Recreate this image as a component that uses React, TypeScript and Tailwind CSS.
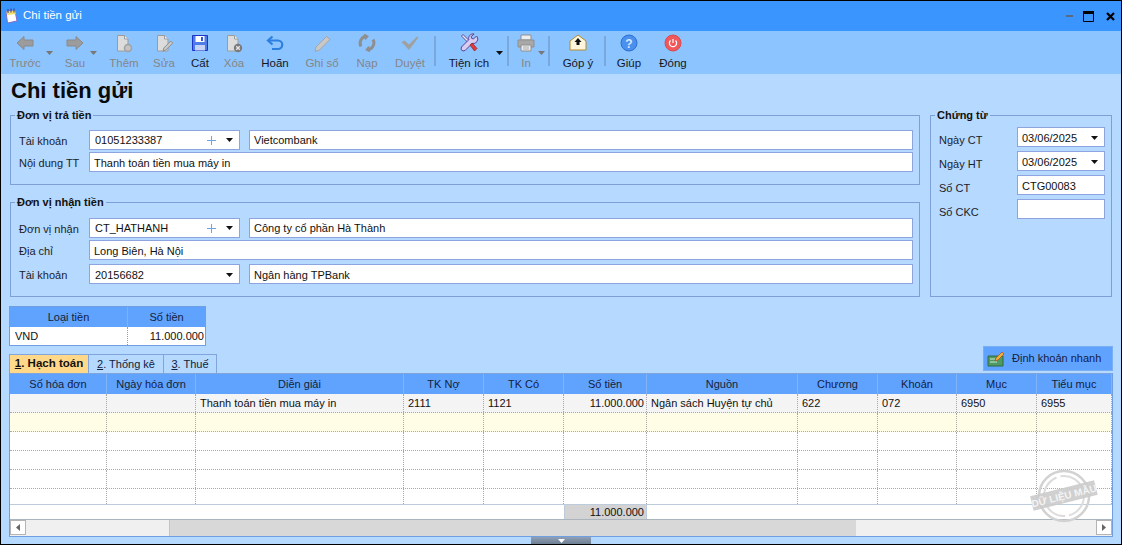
import type { ReactNode } from "react"

const gridCols = "grid grid-cols-[97px_89px_208px_80px_80px_83px_151px_80px_79px_80px_75px]"

const Caret = ({ className = "" }: { className?: string }) => (
  <svg width="7" height="4" viewBox="0 0 7 4" className={className}>
    <polygon points="0,0 7,0 3.5,4" fill="currentColor" />
  </svg>
)

const Page = ({ children }: { children?: ReactNode }) => (
  <svg width="20" height="20" viewBox="0 0 20 20">
    <path d="M3.500 2.500h7l3.500 3.500v12h-10.500z" fill="#dcdcdc" stroke="#9c9c9c" />
    <path d="M10.500 2.500v3.500h3.500" fill="#f4f4f4" stroke="#9c9c9c" />
    {children}
  </svg>
)

const icons: Record<string, ReactNode> = {
  prev: (
    <svg width="20" height="20" viewBox="0 0 20 20">
      <path d="M2 10l7-6.500v3.500h9v6H9v3.500z" fill="#9c9c9c" stroke="#8a8a8a" />
    </svg>
  ),
  next: (
    <svg width="20" height="20" viewBox="0 0 20 20">
      <path d="M18 10l-7-6.500v3.500H2v6h9v3.500z" fill="#9c9c9c" stroke="#8a8a8a" />
    </svg>
  ),
  add: (
    <Page>
      <circle cx="14" cy="15" r="3.500" fill="#c4c4c4" stroke="#a0a0a0" strokeWidth="1.500" />
    </Page>
  ),
  edit: (
    <Page>
      <path d="M9 18l.8-3 7-7 2 2-7 7z" fill="#c9c9c9" stroke="#8f8f8f" />
    </Page>
  ),
  save: (
    <svg width="20" height="20" viewBox="0 0 20 20">
      <path d="M2.500 2.500h15v15h-15z" fill="#4f7be8" stroke="#1b35c8" />
      <path d="M5.500 3h9v6h-9z" fill="#fff" />
      <path d="M11 4h2v4h-2z" fill="#2f55d8" />
      <path d="M5 12h10v5.500H5z" fill="#c5d4f6" />
    </svg>
  ),
  del: (
    <Page>
      <circle cx="14" cy="15" r="4.200" fill="#7a7a7a" />
      <path d="M12.200 13.200l3.600 3.600m0-3.600l-3.600 3.600" stroke="#e8e8e8" strokeWidth="1.300" />
    </Page>
  ),
  undo: (
    <svg width="20" height="20" viewBox="0 0 20 20" fill="none" stroke="#2c7fe0" strokeWidth="2.200">
      <path d="M7.500 3.500L3 7.500l4.500 4" />
      <path d="M4 7.500h9a4 4 0 0 1 0 8.500H7" />
    </svg>
  ),
  post: (
    <svg width="20" height="20" viewBox="0 0 20 20">
      <path d="M3 18.500l1-4.500L14.500 3.500l3.500 3L7.500 17z" fill="#c8c8c8" stroke="#a5a5a5" />
    </svg>
  ),
  reload: (
    <svg width="20" height="20" viewBox="0 0 20 20" fill="none" stroke="#8f8f8f" strokeWidth="3">
      <path d="M4 13.500a7 7 0 0 1 5-10.300" />
      <path d="M16 6.500a7 7 0 0 1-5 10.300" />
      <path d="M7 1.500l3.500 1.800-2.500 3M13 18.500l-3.500-1.800 2.500-3" strokeWidth="1.800" />
    </svg>
  ),
  approve: (
    <svg width="20" height="20" viewBox="0 0 20 20">
      <path d="M1.500 9l3-1.500 4.500 4L17 3.500l1.500 1L9 17z" fill="#a0a0a0" />
    </svg>
  ),
  tools: (
    <svg width="20" height="20" viewBox="0 0 20 20">
      <path d="M2.500 3l1.500-1.500 7.500 7.500-1.500 1.500z" fill="#f2eefa" stroke="#4a3590" strokeWidth="0.900" />
      <path d="M17.500 3l-3 3-1.800-.6-.6-1.800 3-2.600a4.500 4.500 0 0 0-5.300 5.700L2.500 14l-.5 2.500 2 1.500 2.200-.6 7-7a4.500 4.500 0 0 0 4.800-6.900z" fill="#d8ccf0" stroke="#4a3590" strokeWidth="0.900" />
      <path d="M11 12l2-2 5 5.500-2.500 2.500z" fill="#e5393a" stroke="#8f1d1d" strokeWidth="0.700" />
    </svg>
  ),
  print: (
    <svg width="20" height="20" viewBox="0 0 20 20">
      <path d="M5 2h10v5H5z" fill="#eee" stroke="#8f8f8f" />
      <path d="M2 7h16v7H2z" fill="#a8a8a8" stroke="#8f8f8f" />
      <path d="M5 12h10v6H5z" fill="#ececec" stroke="#8f8f8f" />
      <path d="M7 14h6M7 16h6" stroke="#aaa" />
    </svg>
  ),
  mail: (
    <svg width="20" height="20" viewBox="0 0 20 20">
      <path d="M2 8l8-6 8 6v9H2z" fill="#fdf6dc" stroke="#b98a2c" />
      <path d="M10 5l3.500 4H11.500v3h-3V9H6.500z" fill="#111" />
    </svg>
  ),
  help: (
    <svg width="20" height="20" viewBox="0 0 20 20">
      <circle cx="10" cy="10" r="8" fill="#4a90ee" stroke="#2f6fd0" />
      <text x="10" y="14.500" textAnchor="middle" fontSize="12" fontWeight="700" fill="#d9e8ff" fontFamily="Liberation Sans">?</text>
    </svg>
  ),
  close: (
    <svg width="20" height="20" viewBox="0 0 20 20">
      <circle cx="10" cy="10" r="8" fill="#f0595c" stroke="#dc4a4f" />
      <path d="M7.500 7.500a3.600 3.600 0 1 0 5 0" fill="none" stroke="#fff" strokeWidth="1.200" />
      <path d="M10 6v4" stroke="#fff" strokeWidth="1.200" />
    </svg>
  ),
}

type ToolItem = {
  label: string
  icon: string
  width: string
  disabled?: boolean
  caret?: string
}

function ToolButton({ item }: { item: ToolItem }) {
  return (
    <div className={`relative flex flex-col items-center ${item.width}`}>
      <div className="h-[20px] mt-[2px]">{icons[item.icon]}</div>
      <span className={`mt-[2px] text-[11.5px] leading-[16px] whitespace-nowrap ${item.disabled ? "text-[#868686]" : "text-[#16161e]"}`}>
        {item.label}
      </span>
      {item.caret && <Caret className={`absolute top-[20px] ${item.caret} ${item.disabled ? "text-[#777]" : "text-[#111]"}`} />}
    </div>
  )
}

const Sep = () => <div className="w-[2px] h-[30px] mt-[5px] bg-[#78a8dc]" />

function Toolbar() {
  const first: ToolItem[] = [
    { label: "Trước", icon: "prev", width: "w-[48px]", disabled: true, caret: "right-[-4px]" },
    { label: "Sau", icon: "next", width: "w-[52px]", disabled: true, caret: "right-[4px]" },
    { label: "Thêm", icon: "add", width: "w-[46px]", disabled: true },
    { label: "Sửa", icon: "edit", width: "w-[34px]", disabled: true },
    { label: "Cất", icon: "save", width: "w-[38px]" },
    { label: "Xóa", icon: "del", width: "w-[30px]", disabled: true },
    { label: "Hoãn", icon: "undo", width: "w-[52px]" },
    { label: "Ghi sổ", icon: "post", width: "w-[42px]", disabled: true },
    { label: "Nạp", icon: "reload", width: "w-[48px]", disabled: true },
    { label: "Duyệt", icon: "approve", width: "w-[38px]", disabled: true },
  ]
  return (
    <div className="flex h-[43px] bg-[#8cc4ff]">
      {first.map((item) => (
        <ToolButton key={item.label} item={item} />
      ))}
      <div className="ml-[5px]">
        <Sep />
      </div>
      <ToolButton item={{ label: "Tiện ích", icon: "tools", width: "w-[66px]", caret: "right-[-1px]" }} />
      <div className="ml-[5px]">
        <Sep />
      </div>
      <ToolButton item={{ label: "In", icon: "print", width: "w-[34px]", disabled: true, caret: "right-[-2px]" }} />
      <div className="ml-[5px]">
        <Sep />
      </div>
      <ToolButton item={{ label: "Góp ý", icon: "mail", width: "w-[52px] ml-[2px]" }} />
      <Sep />
      <ToolButton item={{ label: "Giúp", icon: "help", width: "w-[46px]" }} />
      <ToolButton item={{ label: "Đóng", icon: "close", width: "w-[42px]" }} />
    </div>
  )
}

function Box({ value = "", className = "w-auto flex-1", pad = "pl-[4px]" }: { value?: string; className?: string; pad?: string }) {
  return (
    <div className={`h-[20px] border border-[#8ea4e0] bg-white flex items-center text-[11px] text-[#111] whitespace-nowrap ${pad} ${className}`}>
      {value}
    </div>
  )
}

function Combo({ value, plus, className = "w-[151px]" }: { value: string; plus?: boolean; className?: string }) {
  return (
    <div className={`h-[20px] border border-[#8ea4e0] bg-white flex items-center pl-[5px] pr-[6px] text-[11px] text-[#111] whitespace-nowrap ${className}`}>
      <span className="flex-1">{value}</span>
      {plus && (
        <svg width="9" height="9" viewBox="0 0 9 9" className="mr-[10px]">
          <path d="M4.500 0v9M0 4.500h9" stroke="#6aa5e8" strokeWidth="1" />
        </svg>
      )}
      <Caret className="text-[#111]" />
    </div>
  )
}

const Label = ({ children, width = "w-[70px]" }: { children: ReactNode; width?: string }) => (
  <span className={`pt-[3px] text-[11px] text-[#1c1c2a] whitespace-nowrap ${width}`}>{children}</span>
)

const DocLabel = ({ children }: { children: ReactNode }) => (
  <span className="w-[78px] pt-[5px] text-[11px] leading-[14px] text-[#1c1c2a] whitespace-nowrap">{children}</span>
)

function Group({ title, className, children }: { title: string; className: string; children: ReactNode }) {
  return (
    <fieldset className={`border border-[#7d9fd8] ${className}`}>
      <legend className="ml-[-4px] px-[2px] h-[14px] text-[11px] leading-[14px] font-bold text-[#111]">{title}</legend>
      {children}
    </fieldset>
  )
}

function Forms() {
  return (
    <div className="flex gap-[10px] ml-[1px]">
      <div className="flex flex-col gap-[10px] w-[910px]">
        <Group title="Đơn vị trả tiền" className="pl-[8px] pr-[6px] pt-[8px] pb-[12px]">
          <div className="flex items-center gap-0">
            <Label>Tài khoản</Label>
            <Combo value="01051233387" plus />
            <Box value="Vietcombank" className="ml-[9px] flex-1" />
          </div>
          <div className="flex items-center mt-[2px]">
            <Label>Nội dung TT</Label>
            <Box value="Thanh toán tiền mua máy in" className="flex-1 pt-[2px]" />
          </div>
        </Group>
        <Group title="Đơn vị nhận tiền" className="pl-[8px] pr-[6px] pt-[9px] pb-[12px]">
          <div className="flex items-center">
            <Label>Đơn vị nhận</Label>
            <Combo value="CT_HATHANH" plus />
            <Box value="Công ty cổ phần Hà Thành" className="ml-[9px] flex-1" />
          </div>
          <div className="flex items-center mt-[2px]">
            <Label>Địa chỉ</Label>
            <Box value="Long Biên, Hà Nội" className="flex-1 pt-[2px]" />
          </div>
          <div className="flex items-center mt-[4px]">
            <Label>Tài khoản</Label>
            <Combo value="20156682" className="w-[151px] pt-[2px]" />
            <Box value="Ngân hàng TPBank" className="ml-[9px] flex-1 pt-[2px]" />
          </div>
        </Group>
      </div>
      <Group title="Chứng từ" className="w-[182px] pl-[8px] pr-[6px] pt-[5px]">
        <div className="flex flex-col gap-[4px]">
          <div className="flex items-center">
            <DocLabel>Ngày CT</DocLabel>
            <Combo value="03/06/2025" className="w-[88px] !pl-[4px] pt-[2px]" />
          </div>
          <div className="flex items-center">
            <DocLabel>Ngày HT</DocLabel>
            <Combo value="03/06/2025" className="w-[88px] !pl-[4px] pt-[2px]" />
          </div>
          <div className="flex items-center">
            <DocLabel>Số CT</DocLabel>
            <Box value="CTG00083" className="w-[88px] pt-[2px]" />
          </div>
          <div className="flex items-center">
            <DocLabel>Số CKC</DocLabel>
            <Box className="w-[88px]" />
          </div>
        </div>
      </Group>
    </div>
  )
}

function CurrencyTable() {
  return (
    <div className="mt-[9px] w-[197px] h-[40px] border border-[#6f9fe0] bg-white text-[11px] text-[#111]">
      <div className="flex h-[20px] bg-[#60a3ff] text-[#14213a]">
        <div className="w-[118px] flex items-center justify-center border-r border-[#7fb2f5]">Loại tiền</div>
        <div className="flex-1 flex items-center justify-center">Số tiền</div>
      </div>
      <div className="flex h-[18px]">
        <div className="w-[118px] pl-[5px] flex items-center border-r border-dotted border-[#999]">VND</div>
        <div className="flex-1 flex items-center justify-end pr-[1px]">11.000.000</div>
      </div>
    </div>
  )
}

function TabLabel({ num, text }: { num: string; text: string }) {
  return (
    <>
      <span className="underline">{num}</span>. {text}
    </>
  )
}

function TabsRow() {
  return (
    <div className="flex items-end justify-between h-[27px]">
      <div className="flex items-stretch h-[19px] border border-b-0 border-[#7fa5dc] bg-[#b5d9ff] text-[11px] text-[#14213a]">
        <div className="w-[78px] flex items-center justify-center bg-[#ffd88a] font-bold text-[11.5px] text-[#111]">
          <TabLabel num="1" text="Hạch toán" />
        </div>
        <div className="w-[75px] flex items-center justify-center border-l border-[#7fa5dc]">
          <TabLabel num="2" text="Thống kê" />
        </div>
        <div className="w-[53px] flex items-center justify-center border-l border-[#7fa5dc]">
          <TabLabel num="3" text="Thuế" />
        </div>
      </div>
      <div className="mb-[2px] w-[130px] h-[25px] flex items-center bg-[#60a3ff] border border-[#79aef5] text-[11px] text-[#14213a]">
        <svg width="18" height="16" viewBox="0 0 18 16" className="ml-[3px] mr-[7px]">
          <path d="M1 5h15v10H1z" fill="#4f9a63" stroke="#2f6b41" />
          <path d="M3 8h5M3 11h7" stroke="#cfe8d5" />
          <path d="M8 10l1-3 6-6 2 2-6 6z" fill="#f0b13c" stroke="#b2471f" strokeWidth="0.700" />
        </svg>
        Định khoản nhanh
      </div>
    </div>
  )
}

const headers = ["Số hóa đơn", "Ngày hóa đơn", "Diễn giải", "TK Nợ", "TK Có", "Số tiền", "Nguồn", "Chương", "Khoản", "Mục", "Tiểu mục"]

const dataRow = ["", "", "Thanh toán tiền mua máy in", "2111", "1121", "11.000.000", "Ngân sách Huyện tự chủ", "622", "072", "6950", "6955"]

function GridRow({ cells, rowClass }: { cells: string[]; rowClass: string }) {
  return (
    <div className={`${gridCols} h-[19px] border-b border-dotted border-[#a8a8a8] ${rowClass}`}>
      {cells.map((cell, i) => (
        <div
          key={i}
          className={`border-r border-dotted border-[#a8a8a8] px-[4px] leading-[19px] whitespace-nowrap overflow-hidden ${i === 5 ? "text-right !pr-[2px]" : ""}`}
        >
          {cell}
        </div>
      ))}
    </div>
  )
}

function ScrollArrow({ side }: { side: "left" | "right" }) {
  return (
    <div className="w-[16px] h-[15px] bg-white border border-[#b4b4b4] flex items-center justify-center">
      <svg width="4" height="7" viewBox="0 0 4 7">
        <polygon points={side === "left" ? "4,0 4,7 0,3.500" : "0,0 0,7 4,3.500"} fill="#666" />
      </svg>
    </div>
  )
}

function DataGrid() {
  const empty = Array(11).fill("") as string[]
  return (
    <div className="relative h-[164px] border border-[#6f9fe0] border-t-0 bg-white text-[11px] text-[#111]">
      <div className={`${gridCols} h-[21px] border-t border-[#7fa5dc] bg-[#60a3ff] text-[#14213a]`}>
        {headers.map((h) => (
          <div key={h} className="flex items-center justify-center border-r border-[#80b4f7] whitespace-nowrap">
            {h}
          </div>
        ))}
      </div>
      <GridRow cells={dataRow} rowClass="bg-[#f4f4f4]" />
      <GridRow cells={empty} rowClass="bg-[#fffde5]" />
      <GridRow cells={empty} rowClass="" />
      <GridRow cells={empty} rowClass="" />
      <GridRow cells={empty} rowClass="" />
      <div className={`${gridCols} h-[15px]`}>
        {empty.map((_, i) => (
          <div key={i} className="border-r border-dotted border-[#a8a8a8]" />
        ))}
      </div>
      <div className={`${gridCols} h-[15px] border-t border-[#bcccdc]`}>
        {empty.map((_, i) =>
          i === 5 ? (
            <div key={i} className="bg-[#d3d3d3] border-x border-[#bcccdc] text-right pr-[2px] leading-[14px]">
              11.000.000
            </div>
          ) : (
            <div key={i} />
          )
        )}
      </div>
      <div className="flex h-[17px] border-t border-[#aab4bc] bg-[#f0f0f0]">
        <ScrollArrow side="left" />
        <div className="w-[143px]" />
        <div className="w-[687px] bg-[#d8d8d8] border-l border-[#c4c4c4]" />
        <div className="flex-1" />
        <ScrollArrow side="right" />
      </div>
      <Stamp />
    </div>
  )
}

function Stamp() {
  return (
    <svg width="68" height="60" viewBox="0 0 68 60" className="absolute right-[14px] bottom-[10px]">
      <circle cx="34" cy="30" r="25" fill="none" stroke="#d2d2d2" strokeWidth="2.500" />
      <circle cx="34" cy="30" r="20" fill="none" stroke="#dcdcdc" strokeWidth="2" strokeDasharray="26 4" />
      <g transform="rotate(-14 34 30)">
        <rect x="1" y="22" width="66" height="15" fill="#cbcbcb" fillOpacity="0.9" />
        <text x="34" y="33.500" textAnchor="middle" fontSize="10" fontWeight="700" fill="#f4f4f4" fontFamily="Liberation Sans">
          DỮ LIỆU MẪU
        </text>
      </g>
    </svg>
  )
}

export default function App() {
  return (
    <div className="w-[1122px] h-[545px] overflow-hidden border border-black bg-[#b5d9ff] flex flex-col [font-family:'Liberation_Sans',sans-serif]">
      <div className="h-[30px] shrink-0 bg-[#3a95ff] flex items-center text-white text-[11.5px]">
        <svg width="16" height="16" viewBox="0 0 16 16" className="ml-[2px] mr-[4px]">
          <path d="M3 3.500l9-1 2 10.500-9.500 2z" fill="#fff" stroke="#7c70c8" />
          <path d="M3.500 3.500l8.500-1 .8 3.500-8.500 1z" fill="#f2de6a" />
          <path d="M5 1v4M8 .5v4M11 .5v4" stroke="#3a3a80" />
        </svg>
        <span>Chi tiền gửi</span>
        <div className="ml-auto flex items-center">
          <div className="w-[7px] h-[2px] bg-[#5a6a80]" />
          <svg width="11" height="11" viewBox="0 0 11 11" className="ml-[10px]">
            <path d="M.5 .5h10v10H.5z" fill="none" stroke="#000" />
            <path d="M0 0h11v3H0z" fill="#000" />
          </svg>
          <svg width="9" height="9" viewBox="0 0 9 9" className="ml-[12px] mr-[6px]">
            <path d="M1 1l7 7M8 1L1 8" stroke="#000" strokeWidth="2.200" />
          </svg>
        </div>
      </div>
      <Toolbar />
      <div className="relative flex-1 px-[8px]">
        <h1 className="h-[34px] pl-[2px] text-[22px] leading-[34px] font-bold text-[#0a0a0a]">Chi tiền gửi</h1>
        <Forms />
        <CurrencyTable />
        <TabsRow />
        <DataGrid />
        <div className="absolute left-[530px] bottom-0 w-[60px] h-[7px] bg-gradient-to-b from-[#8ea0b8] to-[#6f7f92] flex items-center justify-center">
          <Caret className="text-white" />
        </div>
      </div>
    </div>
  )
}
